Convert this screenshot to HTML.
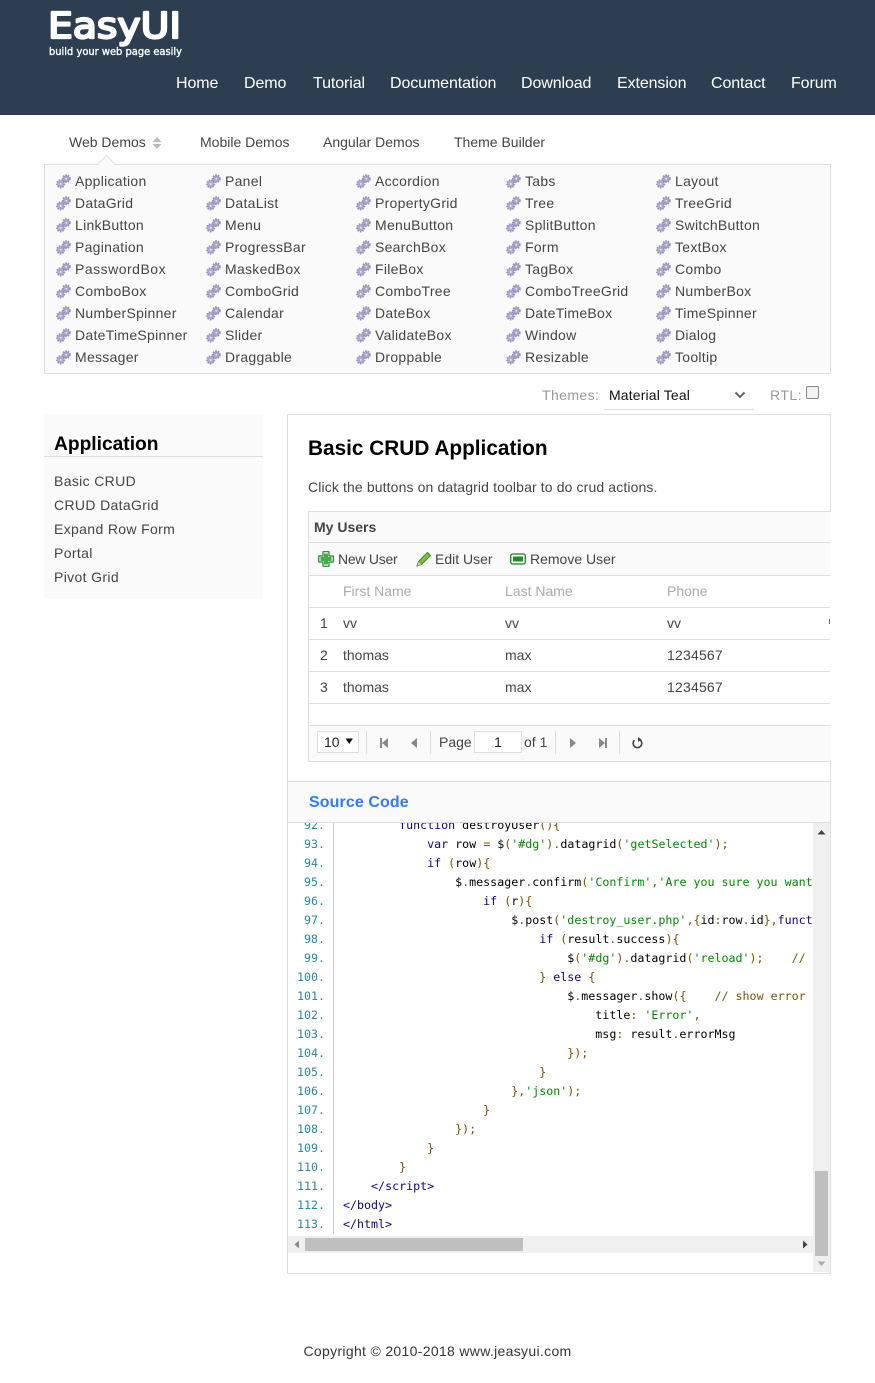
<!DOCTYPE html>
<html><head><meta charset="utf-8"><title>EasyUI</title>
<style>
html,body{margin:0;padding:0;background:#fff}
body{width:875px;height:1383px;position:relative;overflow:hidden;font-family:"Liberation Sans",Arial,sans-serif;font-size:14px;color:#444}
.a{position:absolute;white-space:nowrap}
.t{position:absolute;white-space:nowrap;line-height:20px;height:20px}
.nav{position:absolute;top:74px;font-size:16px;line-height:20px;color:#fff;white-space:nowrap;letter-spacing:-.1px}
.tab{position:absolute;top:132px;line-height:20px;color:#444;white-space:nowrap}
.side{position:absolute;left:54px;line-height:24px;color:#444;white-space:nowrap;letter-spacing:.35px}
.hl{position:absolute;background:#ddd}
pre,pre.a{margin:0;font:11.65px/19px "DejaVu Sans Mono",monospace;color:#000;white-space:pre}
.k{color:#108}.s{color:#080}.p{color:#7a5200}
.sep{position:absolute;top:731px;width:1px;height:23px;background:#ddd}
</style></head><body>
<svg width="0" height="0" style="position:absolute"><defs>
<symbol id="gear" viewBox="0 0 16 16">
<circle cx="11" cy="5" r="3.7" fill="#aaa7c9" stroke="#9490b8" stroke-dasharray="1.6 1.1" stroke-width="2"/><circle cx="11" cy="5" r="1" fill="#e4e3ef"/>
<circle cx="5" cy="10.5" r="3.9" fill="#aeabce" stroke="#9794bc" stroke-dasharray="1.6 1.1" stroke-width="2"/><circle cx="5" cy="10.5" r="1.1" fill="#e4e3ef"/>
</symbol></defs></svg>

<div class="a" style="left:0;top:0;width:875px;height:115px;background:#2d3e50"></div>
<svg class="a" style="left:40px;top:0" width="160" height="62">
<text x="8" y="38" font-family="DejaVu Sans" font-size="36" fill="#fff" stroke="#fff" stroke-width="2.200" stroke-linejoin="round" textLength="133" lengthAdjust="spacingAndGlyphs">EasyUI</text>
<text x="9" y="55" font-family="DejaVu Sans" font-size="10.500" fill="#fff" stroke="#fff" stroke-width=".35" textLength="133" lengthAdjust="spacingAndGlyphs">build your web page easily</text>
</svg>
<div class="nav" style="left:176px">Home</div>
<div class="nav" style="left:244px">Demo</div>
<div class="nav" style="left:313px">Tutorial</div>
<div class="nav" style="left:390px">Documentation</div>
<div class="nav" style="left:521px">Download</div>
<div class="nav" style="left:617px">Extension</div>
<div class="nav" style="left:711px">Contact</div>
<div class="nav" style="left:791px">Forum</div>

<div class="tab" style="left:69px">Web Demos</div>
<svg class="a" style="left:152px;top:137px" width="10" height="13"><path d="M5 0L9.500 5H.5zM5 12L9.500 7H.5z" fill="#bbb"/></svg>
<div class="tab" style="left:200px">Mobile Demos</div>
<div class="tab" style="left:323px">Angular Demos</div>
<div class="tab" style="left:454px">Theme Builder</div>

<div class="a" style="left:44px;top:164px;width:785px;height:208px;border:1px solid #ddd;background:#fafafa"></div>
<svg class="a" style="left:97px;top:155px" width="20" height="11"><path d="M0 10L9.500 .5L19 10" fill="#fafafa" stroke="#ddd"/></svg>

<svg class="a" style="left:0;top:0;pointer-events:none" width="875" height="373">
<use href="#gear" x="56" y="174" width="15" height="15"/><use href="#gear" x="206" y="174" width="15" height="15"/><use href="#gear" x="356" y="174" width="15" height="15"/><use href="#gear" x="506" y="174" width="15" height="15"/><use href="#gear" x="656" y="174" width="15" height="15"/>
<use href="#gear" x="56" y="196" width="15" height="15"/><use href="#gear" x="206" y="196" width="15" height="15"/><use href="#gear" x="356" y="196" width="15" height="15"/><use href="#gear" x="506" y="196" width="15" height="15"/><use href="#gear" x="656" y="196" width="15" height="15"/>
<use href="#gear" x="56" y="218" width="15" height="15"/><use href="#gear" x="206" y="218" width="15" height="15"/><use href="#gear" x="356" y="218" width="15" height="15"/><use href="#gear" x="506" y="218" width="15" height="15"/><use href="#gear" x="656" y="218" width="15" height="15"/>
<use href="#gear" x="56" y="240" width="15" height="15"/><use href="#gear" x="206" y="240" width="15" height="15"/><use href="#gear" x="356" y="240" width="15" height="15"/><use href="#gear" x="506" y="240" width="15" height="15"/><use href="#gear" x="656" y="240" width="15" height="15"/>
<use href="#gear" x="56" y="262" width="15" height="15"/><use href="#gear" x="206" y="262" width="15" height="15"/><use href="#gear" x="356" y="262" width="15" height="15"/><use href="#gear" x="506" y="262" width="15" height="15"/><use href="#gear" x="656" y="262" width="15" height="15"/>
<use href="#gear" x="56" y="284" width="15" height="15"/><use href="#gear" x="206" y="284" width="15" height="15"/><use href="#gear" x="356" y="284" width="15" height="15"/><use href="#gear" x="506" y="284" width="15" height="15"/><use href="#gear" x="656" y="284" width="15" height="15"/>
<use href="#gear" x="56" y="306" width="15" height="15"/><use href="#gear" x="206" y="306" width="15" height="15"/><use href="#gear" x="356" y="306" width="15" height="15"/><use href="#gear" x="506" y="306" width="15" height="15"/><use href="#gear" x="656" y="306" width="15" height="15"/>
<use href="#gear" x="56" y="328" width="15" height="15"/><use href="#gear" x="206" y="328" width="15" height="15"/><use href="#gear" x="356" y="328" width="15" height="15"/><use href="#gear" x="506" y="328" width="15" height="15"/><use href="#gear" x="656" y="328" width="15" height="15"/>
<use href="#gear" x="56" y="350" width="15" height="15"/><use href="#gear" x="206" y="350" width="15" height="15"/><use href="#gear" x="356" y="350" width="15" height="15"/><use href="#gear" x="506" y="350" width="15" height="15"/><use href="#gear" x="656" y="350" width="15" height="15"/>
</svg>

<div style="letter-spacing:.28px">
<div class="t" style="left:75px;top:171px">Application</div><div class="t" style="left:225px;top:171px">Panel</div><div class="t" style="left:375px;top:171px">Accordion</div><div class="t" style="left:525px;top:171px">Tabs</div><div class="t" style="left:675px;top:171px">Layout</div>
<div class="t" style="left:75px;top:193px">DataGrid</div><div class="t" style="left:225px;top:193px">DataList</div><div class="t" style="left:375px;top:193px">PropertyGrid</div><div class="t" style="left:525px;top:193px">Tree</div><div class="t" style="left:675px;top:193px">TreeGrid</div>
<div class="t" style="left:75px;top:215px">LinkButton</div><div class="t" style="left:225px;top:215px">Menu</div><div class="t" style="left:375px;top:215px">MenuButton</div><div class="t" style="left:525px;top:215px">SplitButton</div><div class="t" style="left:675px;top:215px">SwitchButton</div>
<div class="t" style="left:75px;top:237px">Pagination</div><div class="t" style="left:225px;top:237px">ProgressBar</div><div class="t" style="left:375px;top:237px">SearchBox</div><div class="t" style="left:525px;top:237px">Form</div><div class="t" style="left:675px;top:237px">TextBox</div>
<div class="t" style="left:75px;top:259px;letter-spacing:.5px">PasswordBox</div><div class="t" style="left:225px;top:259px">MaskedBox</div><div class="t" style="left:375px;top:259px">FileBox</div><div class="t" style="left:525px;top:259px">TagBox</div><div class="t" style="left:675px;top:259px">Combo</div>
<div class="t" style="left:75px;top:281px">ComboBox</div><div class="t" style="left:225px;top:281px">ComboGrid</div><div class="t" style="left:375px;top:281px">ComboTree</div><div class="t" style="left:525px;top:281px">ComboTreeGrid</div><div class="t" style="left:675px;top:281px">NumberBox</div>
<div class="t" style="left:75px;top:303px">NumberSpinner</div><div class="t" style="left:225px;top:303px">Calendar</div><div class="t" style="left:375px;top:303px">DateBox</div><div class="t" style="left:525px;top:303px">DateTimeBox</div><div class="t" style="left:675px;top:303px">TimeSpinner</div>
<div class="t" style="left:75px;top:325px">DateTimeSpinner</div><div class="t" style="left:225px;top:325px">Slider</div><div class="t" style="left:375px;top:325px">ValidateBox</div><div class="t" style="left:525px;top:325px">Window</div><div class="t" style="left:675px;top:325px">Dialog</div>
<div class="t" style="left:75px;top:347px">Messager</div><div class="t" style="left:225px;top:347px">Draggable</div><div class="t" style="left:375px;top:347px">Droppable</div><div class="t" style="left:525px;top:347px">Resizable</div><div class="t" style="left:675px;top:347px">Tooltip</div>
</div>

<div class="t" style="left:542px;top:385px;color:#999;letter-spacing:.4px">Themes:</div>
<div class="t" style="left:609px;top:385px;color:#111;letter-spacing:.15px">Material Teal</div>
<svg class="a" style="left:734px;top:391px" width="12" height="8"><path d="M1.500 1.500L6 6L10.500 1.500" fill="none" stroke="#666" stroke-width="2"/></svg>
<div class="hl" style="left:604px;top:409px;width:150px;height:1px"></div>
<div class="t" style="left:770px;top:385px;color:#999;letter-spacing:.5px">RTL:</div>
<div class="a" style="left:806px;top:386px;width:11px;height:11px;border:1px solid #888;border-radius:2px;background:#f2f2f2"></div>

<div class="a" style="left:44px;top:414px;width:219px;height:185px;background:#fafafa"></div>
<div class="a" style="left:54px;top:433px;font-size:19.200px;line-height:24px;font-weight:bold;color:#000">Application</div>
<div class="hl" style="left:44px;top:456px;width:219px;height:1px"></div>
<div class="side" style="top:469px">Basic CRUD</div>
<div class="side" style="top:493px">CRUD DataGrid</div>
<div class="side" style="top:517px">Expand Row Form</div>
<div class="side" style="top:541px">Portal</div>
<div class="side" style="top:565px">Pivot Grid</div>

<div class="a" style="left:287px;top:414px;width:542px;height:858px;border:1px solid #ddd;background:#fff"></div>
<div class="a" style="left:308px;top:436px;font-size:20.800px;line-height:26px;font-weight:bold;color:#000">Basic CRUD Application</div>
<div class="t" style="left:308px;top:477px;color:#444;letter-spacing:.125px">Click the buttons on datagrid toolbar to do crud actions.</div>

<div class="a" style="left:308px;top:511px;width:522px;height:214px;border:1px solid #ddd;border-right:0;background:#fff"></div>
<div class="a" style="left:309px;top:512px;width:521px;height:30px;background:#fafafa"></div>
<div class="t" style="left:314px;top:517px;font-weight:bold;color:#444">My Users</div>
<div class="hl" style="left:309px;top:542px;width:521px;height:1px"></div>
<div class="a" style="left:309px;top:543px;width:521px;height:32px;background:#fafafa"></div>
<svg class="a" style="left:318px;top:551px" width="16" height="16"><path d="M5 .7H11V5H15.300V11H11V15.300H5V11H.7V5H5Z" fill="#fff" stroke="#2a7a30" stroke-width="1.200" stroke-linejoin="round"/><path d="M6 2.500H10V6H13.500V10H10V13.500H6V10H2.500V6H6Z" fill="#3fae3f"/></svg>
<div class="t" style="left:338px;top:549px;color:#444;letter-spacing:-.25px">New User</div>
<svg class="a" style="left:416px;top:551px" width="16" height="16"><path d="M1 15L2.500 10.500L11.500 1.500L14.500 4.500L5.500 13.500Z" fill="#7cc242" stroke="#3f8f22"/><path d="M1 15L2.500 10.500L5.500 13.500Z" fill="#e8d9a0" stroke="#666" stroke-width=".5"/></svg>
<div class="t" style="left:435px;top:549px;color:#444">Edit User</div>
<svg class="a" style="left:510px;top:553px" width="16" height="12"><rect x=".7" y="1" width="14.600" height="10" rx="2" fill="#fff" stroke="#1f7a26" stroke-width="1.300"/><rect x="3" y="3.500" width="10" height="5" fill="#1f9026"/></svg>
<div class="t" style="left:530px;top:549px;color:#444">Remove User</div>
<div class="hl" style="left:309px;top:575px;width:521px;height:1px"></div>
<div class="t" style="left:343px;top:581px;color:#aaa">First Name</div>
<div class="t" style="left:505px;top:581px;color:#aaa">Last Name</div>
<div class="t" style="left:667px;top:581px;color:#aaa">Phone</div>
<div class="hl" style="left:309px;top:607px;width:521px;height:1px"></div>
<div class="t" style="left:320px;top:613px">1</div><div class="t" style="left:343px;top:613px">vv</div><div class="t" style="left:505px;top:613px">vv</div><div class="t" style="left:667px;top:613px">vv</div>
<div class="a" style="left:829px;top:619px;width:1px;height:5px;background:#666"></div>
<div class="hl" style="left:309px;top:639px;width:521px;height:1px"></div>
<div class="t" style="left:320px;top:645px">2</div><div class="t" style="left:343px;top:645px">thomas</div><div class="t" style="left:505px;top:645px">max</div><div class="t" style="left:667px;top:645px;letter-spacing:.2px">1234567</div>
<div class="hl" style="left:309px;top:671px;width:521px;height:1px"></div>
<div class="t" style="left:320px;top:677px">3</div><div class="t" style="left:343px;top:677px">thomas</div><div class="t" style="left:505px;top:677px">max</div><div class="t" style="left:667px;top:677px;letter-spacing:.2px">1234567</div>
<div class="hl" style="left:309px;top:703px;width:521px;height:1px"></div>

<div class="a" style="left:308px;top:725px;width:522px;height:35px;border:1px solid #ddd;border-right:0;background:#fafafa"></div>
<div class="a" style="left:317px;top:731px;width:40px;height:20px;border:1px solid #ddd;background:#fff"></div>
<div class="t" style="left:324px;top:732px;color:#222">10</div>
<svg class="a" style="left:345px;top:738px" width="9" height="7"><path d="M.5 .5H8L4.250 6Z" fill="#111"/></svg>
<div class="sep" style="left:366px"></div><div class="sep" style="left:430px"></div><div class="sep" style="left:555px"></div><div class="sep" style="left:619px"></div>
<svg class="a" style="left:378px;top:737px" width="12" height="12"><path d="M2 1H4V11H2ZM10 1V11L4 6Z" fill="#888"/></svg>
<svg class="a" style="left:408px;top:737px" width="12" height="12"><path d="M9 1V11L3 6Z" fill="#888"/></svg>
<div class="t" style="left:439px;top:732px">Page</div>
<div class="a" style="left:474px;top:731px;width:46px;height:20px;border:1px solid #ddd;background:#fff;text-align:center;line-height:20px;color:#222">1</div>
<div class="t" style="left:524px;top:732px">of 1</div>
<svg class="a" style="left:567px;top:737px" width="12" height="12"><path d="M3 1V11L9 6Z" fill="#888"/></svg>
<svg class="a" style="left:597px;top:737px" width="12" height="12"><path d="M2 1V11L8 6ZM8 1H10V11H8Z" fill="#888"/></svg>
<svg class="a" style="left:631px;top:737px" width="12" height="12"><path d="M3.500 3.200A4.300 4.300 0 1 0 8 2.300" fill="none" stroke="#444" stroke-width="1.600"/><path d="M7 0L7 5L10.500 2.500Z" fill="#444"/></svg>

<div class="a" style="left:288px;top:781px;width:542px;height:41px;background:#fafafa;border-top:1px solid #ddd"></div>
<div class="a" style="left:288px;top:822px;width:542px;height:1px;background:#ddd"></div>
<div class="a" style="left:309px;top:793px;font-size:16px;line-height:20px;font-weight:bold;color:#2f7cf6;letter-spacing:.1px">Source Code</div>

<div class="a" style="left:288px;top:823px;width:525px;height:413px;overflow:hidden;background:#fff">
<div class="a" style="left:45px;top:0;width:1px;height:411px;background:#ccd"></div>
<pre class="a" style="left:0;top:-7px;width:37px;text-align:right;color:#2a86a8">92.
93.
94.
95.
96.
97.
98.
99.
100.
101.
102.
103.
104.
105.
106.
107.
108.
109.
110.
111.
112.
113.</pre>
<pre class="a" style="left:55px;top:-7px">        <span class="k">function</span> destroyUser<span class="p">(){</span>
            <span class="k">var</span> row <span class="p">=</span> $<span class="p">(</span><span class="s">'#dg'</span><span class="p">).</span>datagrid<span class="p">(</span><span class="s">'getSelected'</span><span class="p">);</span>
            <span class="k">if</span> <span class="p">(</span>row<span class="p">){</span>
                $<span class="p">.</span>messager<span class="p">.</span>confirm<span class="p">(</span><span class="s">'Confirm'</span><span class="p">,</span><span class="s">'Are you sure you want to destroy this user?'</span><span class="p">,</span><span class="k">function</span><span class="p">(</span>r<span class="p">){</span>
                    <span class="k">if</span> <span class="p">(</span>r<span class="p">){</span>
                        $<span class="p">.</span>post<span class="p">(</span><span class="s">'destroy_user.php'</span><span class="p">,{</span>id<span class="p">:</span>row<span class="p">.</span>id<span class="p">},</span><span class="k">function</span><span class="p">(</span>result<span class="p">){</span>
                            <span class="k">if</span> <span class="p">(</span>result<span class="p">.</span>success<span class="p">){</span>
                                $<span class="p">(</span><span class="s">'#dg'</span><span class="p">).</span>datagrid<span class="p">(</span><span class="s">'reload'</span><span class="p">);</span>    <span class="p">// reload the user data</span>
                            <span class="p">}</span> <span class="k">else</span> <span class="p">{</span>
                                $<span class="p">.</span>messager<span class="p">.</span>show<span class="p">({</span>    <span class="p">// show error message</span>
                                    title<span class="p">:</span> <span class="s">'Error'</span><span class="p">,</span>
                                    msg<span class="p">:</span> result<span class="p">.</span>errorMsg
                                <span class="p">});</span>
                            <span class="p">}</span>
                        <span class="p">},</span><span class="s">'json'</span><span class="p">);</span>
                    <span class="p">}</span>
                <span class="p">});</span>
            <span class="p">}</span>
        <span class="p">}</span>
    <span class="k">&lt;/script&gt;</span>
<span class="k">&lt;/body&gt;</span>
<span class="k">&lt;/html&gt;</span></pre>
</div>

<div class="a" style="left:288px;top:1236px;width:525px;height:17px;background:#f0f0f0"></div>
<div class="a" style="left:305px;top:1238px;width:218px;height:13px;background:#bfbfbf"></div>
<svg class="a" style="left:294px;top:1240px" width="6" height="9"><path d="M5 .5V8.500L.5 4.500Z" fill="#888"/></svg>
<svg class="a" style="left:802px;top:1240px" width="6" height="9"><path d="M1 .5V8.500L5.500 4.500Z" fill="#444"/></svg>
<div class="a" style="left:813px;top:823px;width:17px;height:449px;background:#f0f0f0"></div>
<div class="a" style="left:815px;top:1171px;width:13px;height:85px;background:#bfbfbf"></div>
<svg class="a" style="left:817px;top:829px" width="9" height="6"><path d="M.5 5.500H8.500L4.500 1Z" fill="#444"/></svg>
<svg class="a" style="left:817px;top:1261px" width="9" height="6"><path d="M.5 .5H8.500L4.500 5Z" fill="#aaa"/></svg>

<div class="a" style="left:0;top:1341px;width:875px;text-align:center;line-height:20px;color:#333;letter-spacing:.32px">Copyright © 2010-2018 www.jeasyui.com</div>
</body></html>
